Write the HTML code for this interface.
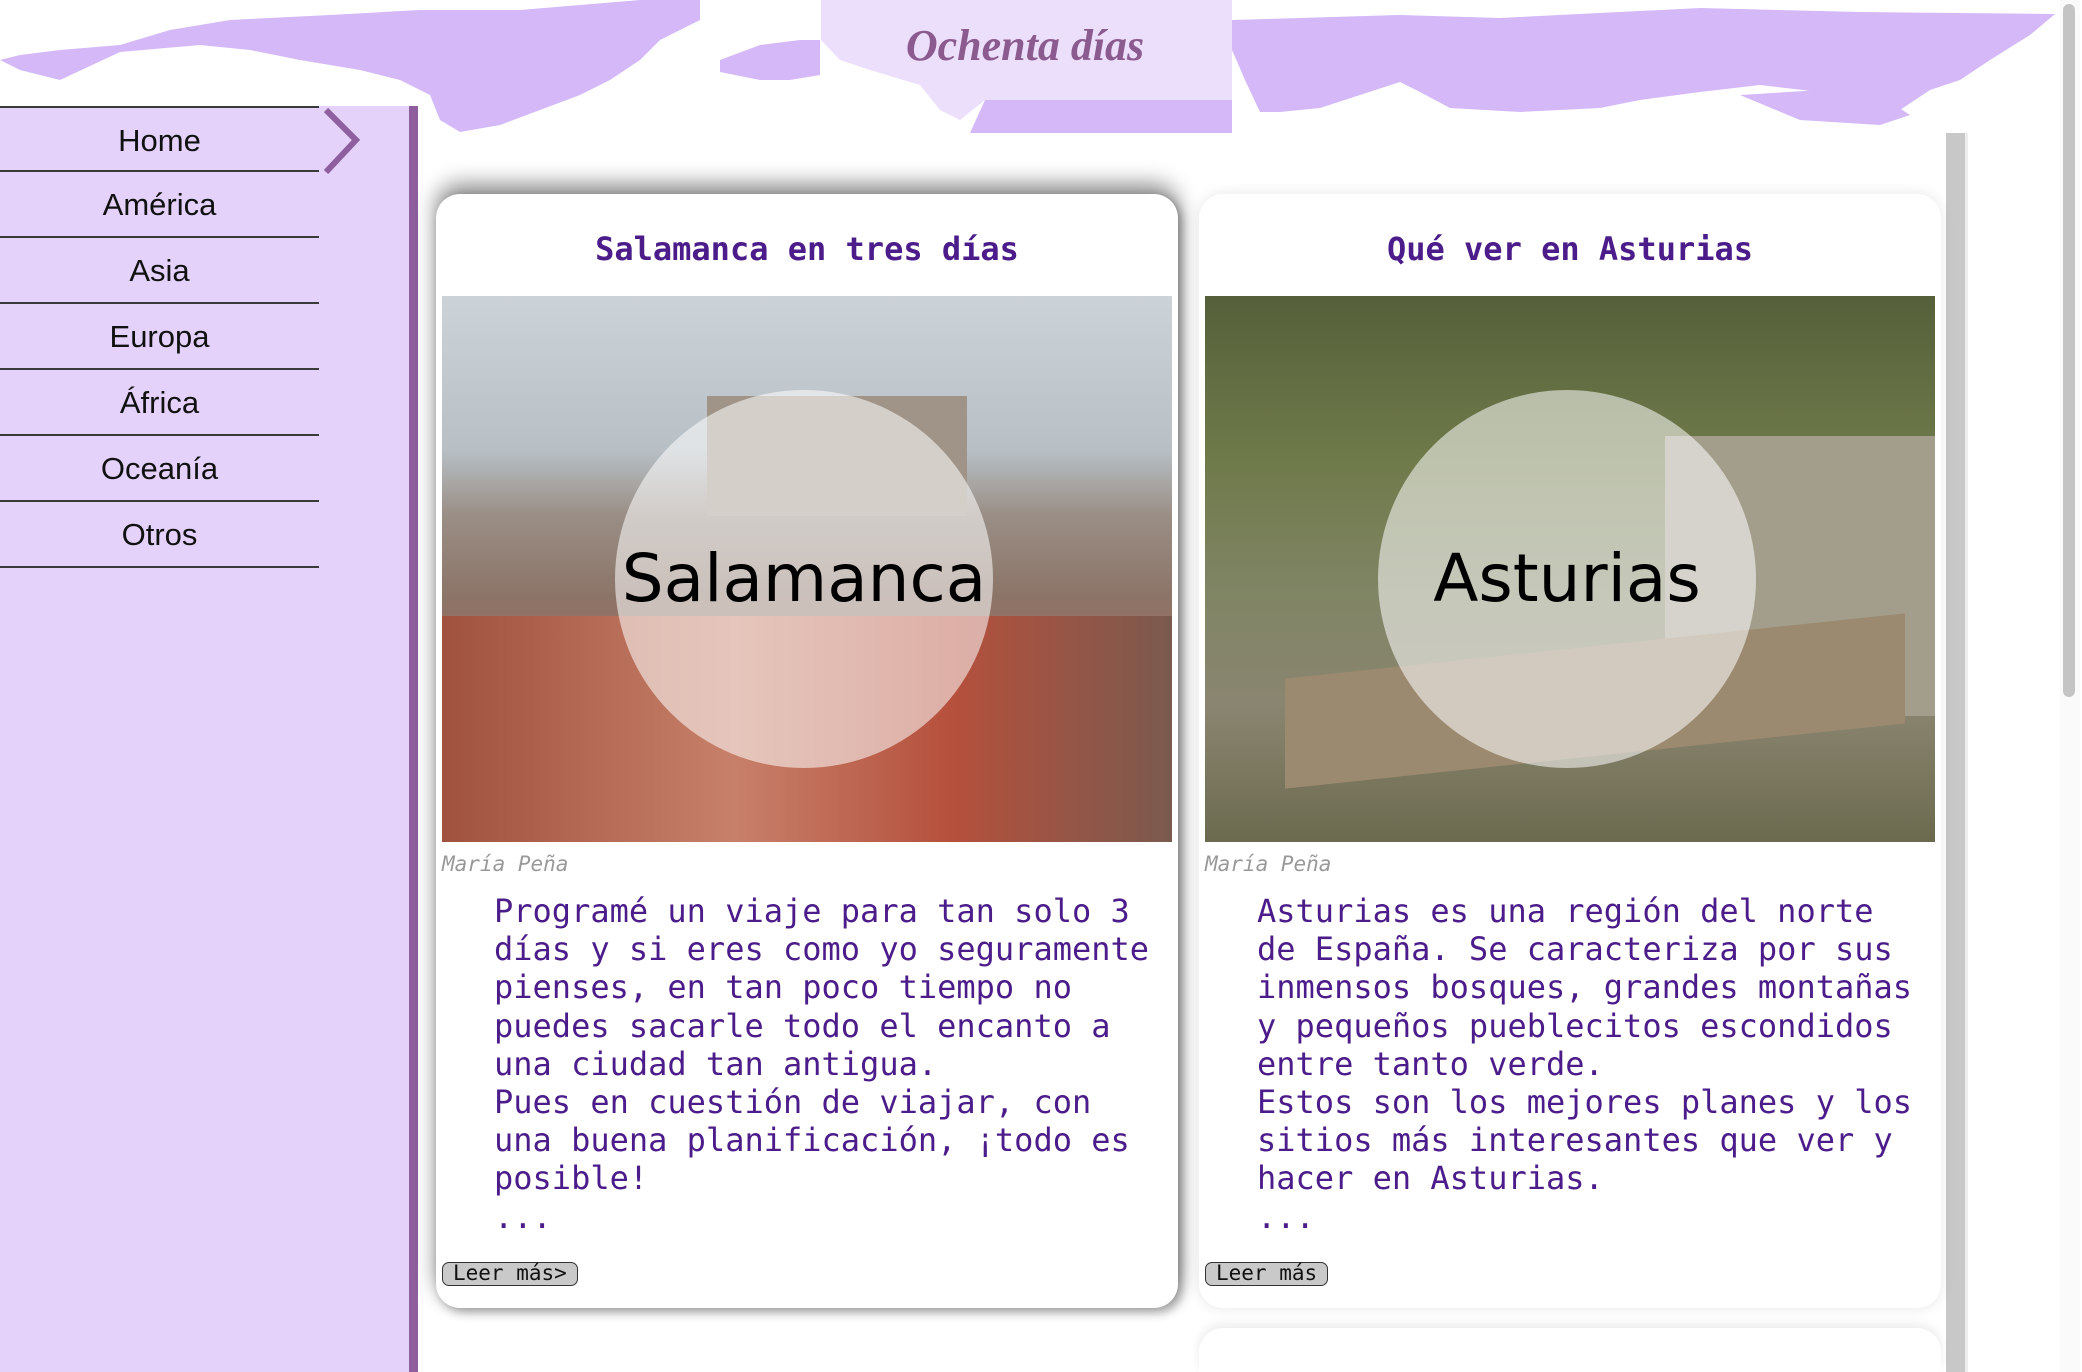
<!DOCTYPE html>
<html style="overflow:hidden;height:1372px"><head><meta charset="utf-8"><style>
*{margin:0;padding:0;box-sizing:border-box}
body{width:2082px;height:1372px;overflow:hidden;background:#fff;position:relative;font-family:"DejaVu Sans Mono","Liberation Mono",monospace}
.side{position:absolute;left:0;top:106px;width:418px;height:1266px;background:#e4d2fb;border-right:9px solid #8e5e9e}
.side a{display:block;width:319px;height:66px;border-bottom:2px solid #3a3a3a;text-align:center;font:31px/66px "Liberation Sans",sans-serif;color:#111;text-decoration:none}
.side a:first-child{border-top:2px solid #3a3a3a}
.card{position:absolute;top:194px;width:742px;height:1114px;background:#fff;border-radius:24px}
.c1{left:436px;box-shadow:0 -10px 22px rgba(0,0,0,.45),4px 4px 10px rgba(0,0,0,.35)}
.c2{left:1199px;box-shadow:0 0 14px rgba(0,0,0,.1)}
.card h2{position:absolute;top:36px;left:0;width:100%;text-align:center;font-size:32px;font-weight:bold;color:#4b1c8a}
.img{position:absolute;left:6px;top:102px;width:730px;height:546px;overflow:hidden}
.circ{position:absolute;left:173px;top:94px;width:378px;height:378px;border-radius:50%;background:rgba(255,255,255,.55);text-align:center;font:66px/378px "DejaVu Sans","Liberation Sans",sans-serif;color:#000}
.auth{position:absolute;left:6px;top:658px;font-size:21px;font-style:italic;color:#999}
.txt{position:absolute;left:58px;top:698px;width:680px;font-size:32px;line-height:38.2px;color:#4b1c8a;white-space:pre}
.btn{position:absolute;left:6px;top:1068px;height:24px;padding:0 10px;border:1.5px solid #333;border-radius:7px;background:#c9c9c9;font-size:21px;line-height:21px;color:#111}
</style></head><body>
<svg style="position:absolute;left:0;top:0" width="2060" height="135" viewBox="0 0 2060 135">
<g fill="#d4b8f8">
<path d="M0 60 L20 55 L60 50 L120 45 L170 30 L230 20 L330 15 L420 10 L520 10 L640 0 L700 0 L700 20 L660 40 L640 60 L610 80 L580 95 L540 110 L500 125 L460 132 L440 120 L430 95 L400 80 L360 70 L300 60 L250 50 L200 45 L120 52 L60 80 L20 70 Z"/>
<path d="M720 60 L760 45 L800 40 L820 40 L820 75 L790 80 L760 80 L720 72 Z"/>
<path d="M1232 20 L1300 18 L1400 15 L1500 18 L1700 8 L1860 12 L2055 14 L2030 35 L1990 60 L1960 80 L1930 90 L1900 110 L1860 100 L1820 92 L1760 85 L1700 92 L1640 100 L1600 108 L1520 112 L1450 108 L1420 92 L1400 82 L1360 95 L1320 108 L1280 112 L1260 112 L1245 80 L1232 50 Z"/>
<path d="M1740 95 L1820 90 L1880 95 L1910 115 L1880 125 L1800 120 Z"/>
<path d="M985 100 L1232 100 L1232 133 L970 133 Z"/>
</g>
<path d="M821 0 L1232 0 L1232 100 L985 100 L960 120 L940 110 L920 85 L870 70 L840 60 L821 40 Z" fill="#ecdffc"/>
<text x="1025" y="60" text-anchor="middle" font-family="Liberation Serif,serif" font-style="italic" font-weight="bold" font-size="44" fill="#8b5a8e">Ochenta días</text>
</svg>
<div style="position:absolute;left:1946px;top:133px;width:22px;height:1239px;background:#c8c8c8;border-right:3px solid #eee"></div>
<div style="position:absolute;left:2060px;top:0;width:20px;height:1372px;background:#fafafa"></div>
<div style="position:absolute;left:2063px;top:4px;width:12px;height:693px;background:#c4c4c4;border-radius:6px"></div>
<div class="side">
<a>Home</a><a>América</a><a>Asia</a><a>Europa</a><a>África</a><a>Oceanía</a><a>Otros</a>
</div>
<svg style="position:absolute;left:322px;top:108px" width="40" height="66"><path d="M4 2 L34 32 L4 64" fill="none" stroke="#8e5e9e" stroke-width="6"/></svg>

<div class="card c1">
<h2>Salamanca en tres días</h2>
<div class="img" style="background:linear-gradient(180deg,#ccd3d8 0%,#b8c0c6 28%,#9a8f86 40%,#8c7468 55%,#a86a55 75%,#8e5748 100%)">
<div style="position:absolute;left:0;top:320px;width:730px;height:226px;background:linear-gradient(90deg,#a0523e,#c7806a 40%,#b5503c 70%,#7a5a4e)"></div>
<div style="position:absolute;left:265px;top:100px;width:260px;height:120px;background:#a09488"></div>
<div class="circ">Salamanca</div>
</div>
<div class="auth">María Peña</div>
<div class="txt">Programé un viaje para tan solo 3
días y si eres como yo seguramente
pienses, en tan poco tiempo no
puedes sacarle todo el encanto a
una ciudad tan antigua.
Pues en cuestión de viajar, con
una buena planificación, ¡todo es
posible!
...</div>
<div class="btn">Leer más&gt;</div>
</div>

<div class="card c2">
<h2>Qué ver en Asturias</h2>
<div class="img" style="background:linear-gradient(180deg,#55603a 0%,#6f7a4a 30%,#808565 55%,#8a8570 75%,#6b6a4e 100%)">
<div style="position:absolute;left:460px;top:140px;width:270px;height:280px;background:#a39e8c"></div>
<div style="position:absolute;left:80px;top:350px;width:620px;height:110px;background:#9c8a70;transform:skewY(-6deg)"></div>
<div class="circ">Asturias</div>
</div>
<div class="auth">María Peña</div>
<div class="txt">Asturias es una región del norte
de España. Se caracteriza por sus
inmensos bosques, grandes montañas
y pequeños pueblecitos escondidos
entre tanto verde.
Estos son los mejores planes y los
sitios más interesantes que ver y
hacer en Asturias.
...</div>
<div class="btn">Leer más</div>
</div>

<div style="position:absolute;left:1199px;top:1328px;width:742px;height:44px;background:#fff;border-radius:24px 24px 0 0;box-shadow:0 -4px 10px rgba(0,0,0,.08)"></div>
</body></html>
